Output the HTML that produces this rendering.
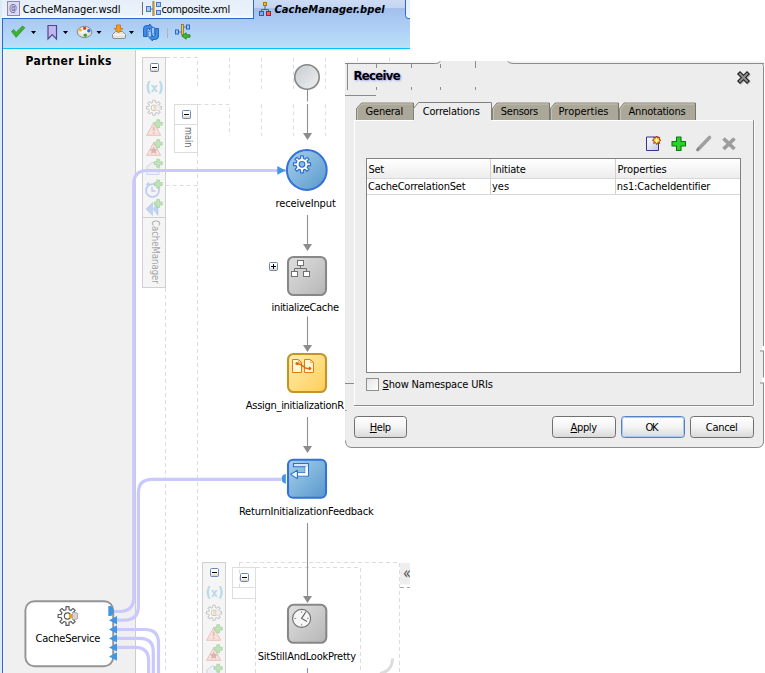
<!DOCTYPE html>
<html><head><meta charset="utf-8"><title>CacheManager.bpel</title>
<style>
html,body{margin:0;padding:0;background:#fff;}
body{width:765px;height:673px;position:relative;overflow:hidden;font-family:"DejaVu Sans Condensed","DejaVu Sans","Liberation Sans",sans-serif;font-size:11px;color:#000;}
.a{position:absolute;}
.t{position:absolute;white-space:nowrap;line-height:14px;height:14px;}
#ide{left:0;top:0;width:410px;height:673px;overflow:hidden;background:#fff;}
#tabbar{left:0;top:0;width:410px;height:18px;background:linear-gradient(#e6eef9,#eaf2fb 80%,#f6fbff);}
#toolbar{left:3px;top:19px;width:407px;height:29px;background:linear-gradient(#a9c8f3,#b2d4f6 50%,#bbe0f8);}
#cyan{left:3px;top:48px;width:407px;height:2px;background:linear-gradient(#08c4f4 50%,#fdf6f2 50%);}
#lb1{left:0;top:0;width:2px;height:673px;background:#dce9f7;}
#lb2{left:2px;top:18px;width:1px;height:655px;background:#2f68c8;}
#panel{left:3px;top:50px;width:131px;height:623px;background:#f0f0f0;border-left:1px solid #f8f5f0;border-right:1px solid #cccccc;}
</style></head><body>
<div id="ide" class="a">
<div id="tabbar" class="a"></div>
<div id="toolbar" class="a"></div>
<div id="cyan" class="a"></div>
<div id="lb1" class="a"></div><div id="lb2" class="a"></div>
<div id="panel" class="a"></div>
<!--TABS-->
<svg class="a" style="left:0;top:0" width="410" height="60" viewBox="0 0 410 60">
<defs>
<linearGradient id="atab" x1="0" y1="0" x2="0" y2="1"><stop offset="0" stop-color="#cddcf5"/><stop offset="0.42" stop-color="#c3d5f2"/><stop offset="0.43" stop-color="#a3bfec"/><stop offset="1" stop-color="#a9c8f3"/></linearGradient>
</defs>
<!-- tab bar bottom line -->
<rect x="2" y="18" width="252" height="1" fill="#2f68c8"/>
<rect x="405" y="18" width="5" height="1" fill="#2f68c8"/>
<!-- active tab -->
<path d="M253.5 19 V0 H405.5 V15.500 Q405.5 18.500 408.5 18.500 H410 V19 Z" fill="url(#atab)"/>
<path d="M253.5 19 V0" stroke="#2f68c8" stroke-width="1" fill="none"/>
<path d="M405.5 0 V15.500 Q405.5 18.500 408.5 18.500 H410" stroke="#2f68c8" stroke-width="1" fill="none"/>
<!-- tab separator -->
<rect x="142" y="2" width="1" height="13" fill="#707070"/>
<!-- @ icon -->
<rect x="7.5" y="1.5" width="12" height="14" fill="#dcdcee" stroke="#8c8ab4" stroke-width="1"/>
<!-- composite icon -->
<g>
<rect x="153" y="1" width="2" height="15" fill="#e8c040"/><rect x="152.5" y="1" width="1" height="15" fill="#807040"/>
<rect x="146.500" y="6.500" width="4" height="5" fill="#a8c8f0" stroke="#4878c0"/>
<rect x="156.500" y="2.500" width="4" height="4" fill="#a8c8f0" stroke="#4878c0"/>
<rect x="156.500" y="10.500" width="4" height="4" fill="#a8c8f0" stroke="#4878c0"/>
<path d="M151 9 H153" stroke="#4878c0"/>
</g>
<!-- bpel icon -->
<g>
<path d="M265 6 V9 M261.500 12 V9.500 H268.500 V12" stroke="#606060" fill="none"/>
<rect x="263.500" y="2.500" width="3" height="3" fill="#f0c020" stroke="#b07800"/>
<rect x="259.500" y="11.500" width="4" height="4" fill="#80a8f0" stroke="#3058c0"/>
<rect x="266.500" y="11.500" width="4" height="4" fill="#f06050" stroke="#b02010"/>
</g>
<!-- toolbar icons -->
<path d="M11.500 31.500 L13.800 29.500 L16 32.500 L22.500 26 L24.800 27.800 L16.200 37.300 Z" fill="#3cb42c" stroke="#258a1c" stroke-width="0.7"/>
<path d="M31 31 h5 l-2.500 3 z M63 31 h5 l-2.500 3 z M96.500 31 h5 l-2.500 3 z M129 31 h5 l-2.500 3 z" fill="#000"/>
<path d="M48 25.500 H56.500 V39 L52.250 34.500 L48 39 Z" fill="#c0b8ec" stroke="#54448c" stroke-width="1.2"/>
<!-- palette -->
<ellipse cx="84.500" cy="32" rx="7.300" ry="5.600" fill="#e4e2dc" stroke="#8a8680" stroke-width="1"/>
<ellipse cx="83.500" cy="30.800" rx="5" ry="3" fill="#f6f5f2"/>
<circle cx="80.300" cy="30" r="1.600" fill="#e8b418"/><circle cx="84.600" cy="28.300" r="1.600" fill="#e03424"/><circle cx="88.800" cy="30.800" r="1.700" fill="#2a6ae4"/><circle cx="85.300" cy="35.300" r="1.700" fill="#2ea82e"/>
<!-- download -->
<path d="M112.500 34.500 L115.500 31.500 H122.500 L125.500 34.500 V37 Q125.500 38.500 124 38.500 H114 Q112.500 38.500 112.500 37 Z" fill="#e4e4e4" stroke="#8e8e8e"/>
<path d="M113 34.800 H125 " stroke="#f8f8f8"/>
<path d="M116.500 25 H120.500 V28.500 H122.800 L118.500 33 L114.200 28.500 H116.500 Z" fill="#f59a23" stroke="#d06c08" stroke-width="0.8"/>
<!-- refresh -->
<path d="M143.500 28.500 Q143.500 25.500 147 25.500 H149.500 V24 L152.500 27 L149.500 30 V28.500 H148 Q147 28.500 147 30 V36.500 H143.500 Z" fill="#3c8ce8" stroke="#1c5cb8" stroke-width="0.9" stroke-linejoin="round"/>
<path d="M158.500 36 Q158.500 39.500 155 39.500 H152.500 V41 L149.500 38 L152.500 35 V36.500 H154 Q155 36.500 155 35 V28.500 H158.500 Z" fill="#3c8ce8" stroke="#1c5cb8" stroke-width="0.9" stroke-linejoin="round"/>
<path d="M148 31 H151.500 V37 H148 Z M151.500 27.500 H154.500 V34 H151.500 Z" fill="#9cc8f6" stroke="#2a6cc8" stroke-width="0.8"/>
<rect x="167" y="28" width="1" height="10" fill="#b8b0a8"/>
<!-- last icon -->
<rect x="181.500" y="24.500" width="2" height="10" fill="#f0c830" stroke="#806820" stroke-width="0.7"/>
<rect x="175.500" y="30" width="3" height="4" fill="#9cc4f4" stroke="#2c64c0"/>
<rect x="186.500" y="25" width="3" height="4" fill="#9cc4f4" stroke="#2c64c0"/>
<path d="M178.500 32 H181.500 M183.500 27 H186.500" stroke="#2c64c0" stroke-width="0.8"/>
<path d="M190 34.800 H186.200 V32.800 L181.800 36 L186.200 39.200 V37.200 H190 Z" fill="#46b836" stroke="#1c7c14" stroke-width="0.8" stroke-linejoin="round"/>
</svg>
<div class="t" style="left:8.500px;top:1px;color:#7472aa;font-size:10px;font-weight:bold;transform:scaleX(0.9);transform-origin:0 0;">@</div>
<svg class="a" style="left:0;top:0" width="410" height="673" viewBox="0 0 410 673">
<defs>
<linearGradient id="gBlue" x1="0" y1="0" x2="1" y2="1"><stop offset="0" stop-color="#a8d1ea"/><stop offset="1" stop-color="#5898cd"/></linearGradient>
<linearGradient id="gGray" x1="0" y1="0" x2="1" y2="1"><stop offset="0" stop-color="#e0e0e0"/><stop offset="1" stop-color="#b6b6b6"/></linearGradient>
<linearGradient id="gGold" x1="0" y1="0" x2="1" y2="1"><stop offset="0" stop-color="#ffeeb0"/><stop offset="1" stop-color="#ffcd58"/></linearGradient>
<linearGradient id="gStart" x1="0" y1="0" x2="1" y2="1"><stop offset="0" stop-color="#c8ccd0"/><stop offset="1" stop-color="#eef0f0"/></linearGradient>
<linearGradient id="gIco" x1="0" y1="0" x2="0" y2="1"><stop offset="0" stop-color="#ffffff"/><stop offset="0.5" stop-color="#ffffff"/><stop offset="1" stop-color="#d8ccb0"/></linearGradient>
</defs>
<path d="M166 57.500 H197.500 V89" stroke="#dcdcdc" stroke-width="1" stroke-dasharray="4 3" fill="none"/>
<path d="M229.5 57.500 V89" stroke="#dcdcdc" stroke-width="1" stroke-dasharray="4 3" fill="none"/>
<path d="M261.5 57.500 V89" stroke="#dcdcdc" stroke-width="1" stroke-dasharray="4 3" fill="none"/>
<path d="M293.5 57.500 V89" stroke="#dcdcdc" stroke-width="1" stroke-dasharray="4 3" fill="none"/>
<path d="M325.5 57.500 V89" stroke="#dcdcdc" stroke-width="1" stroke-dasharray="4 3" fill="none"/>
<path d="M197.500 104.500 H229.500 V136" stroke="#dcdcdc" stroke-width="1" stroke-dasharray="4 3" fill="none"/>
<path d="M261.5 104.500 V136" stroke="#dcdcdc" stroke-width="1" stroke-dasharray="4 3" fill="none"/>
<path d="M293.5 104.500 V136" stroke="#dcdcdc" stroke-width="1" stroke-dasharray="4 3" fill="none"/>
<path d="M325.5 104.500 V136" stroke="#dcdcdc" stroke-width="1" stroke-dasharray="4 3" fill="none"/>
<path d="M165.500 185.500 H197.500" stroke="#dcdcdc" stroke-width="1" stroke-dasharray="4 3" fill="none"/>
<path d="M357.500 57.500 V62" stroke="#dcdcdc" stroke-width="1" stroke-dasharray="4 3" fill="none"/>
<path d="M389.500 57.500 V62" stroke="#dcdcdc" stroke-width="1" stroke-dasharray="4 3" fill="none"/>
<path d="M165.500 288 V673" stroke="#dcdcdc" stroke-width="1" stroke-dasharray="4 3" fill="none"/>
<path d="M197.500 153 V673" stroke="#dcdcdc" stroke-width="1" stroke-dasharray="4 3" fill="none"/>
<path d="M239 562.500 H399.500 V673" stroke="#dcdcdc" stroke-width="1" stroke-dasharray="4 3" fill="none"/>
<path d="M256 567.500 H360.500 V673" stroke="#dcdcdc" stroke-width="1" stroke-dasharray="4 3" fill="none"/>
<path d="M255.500 599 V673" stroke="#dcdcdc" stroke-width="1" stroke-dasharray="4 3" fill="none"/>
<path d="M400 587.500 H410" stroke="#a8a8a8" stroke-dasharray="4 3" fill="none"/>
<rect x="142.5" y="57.5" width="23" height="230" fill="#f5f5f5" stroke="#d0d0d0"/>
<path d="M142.5 217.5 H165.5" stroke="#d0d0d0"/>
<rect x="174.500" y="104.500" width="23" height="48" fill="#fff" stroke="#dcdcdc"/><path d="M174.500 124.500 H197.500" stroke="#dcdcdc"/>
<rect x="202.5" y="562.5" width="23" height="120" fill="#f5f5f5" stroke="#d0d0d0"/>
<rect x="232.500" y="567.500" width="23" height="31" fill="#fff" stroke="#dedede"/><path d="M232.500 587.500 H255.500" stroke="#dedede"/>
<path d="M239.500 562.500 V587" stroke="#dcdcdc" stroke-width="1" stroke-dasharray="4 3" fill="none"/>
<g transform="translate(150 63)"><rect x="0.5" y="0.5" width="8" height="8" rx="1" fill="url(#gIco)" stroke="#6a88b4"/><rect x="2" y="4" width="5" height="1" fill="#000"/></g>
<g transform="translate(182 110)"><rect x="0.5" y="0.5" width="8" height="8" rx="1" fill="url(#gIco)" stroke="#6a88b4"/><rect x="2" y="4" width="5" height="1" fill="#000"/></g>
<g transform="translate(210 568)"><rect x="0.5" y="0.5" width="8" height="8" rx="1" fill="url(#gIco)" stroke="#6a88b4"/><rect x="2" y="4" width="5" height="1" fill="#000"/></g>
<g transform="translate(240 573)"><rect x="0.5" y="0.5" width="8" height="8" rx="1" fill="url(#gIco)" stroke="#6a88b4"/><rect x="2" y="4" width="5" height="1" fill="#000"/></g>
<g transform="translate(269 262)"><rect x="0.5" y="0.5" width="8" height="8" rx="1" fill="url(#gIco)" stroke="#6a88b4"/><rect x="2" y="4" width="5" height="1" fill="#000"/><rect x="4" y="2" width="1" height="5" fill="#000"/></g>
<path d="M159.25 106.54 L161.51 106.61 L161.51 108.99 L159.25 109.06 L158.60 110.62 L160.15 112.27 L158.47 113.95 L156.82 112.40 L155.26 113.05 L155.19 115.31 L152.81 115.31 L152.74 113.05 L151.18 112.40 L149.53 113.95 L147.85 112.27 L149.40 110.62 L148.75 109.06 L146.49 108.99 L146.49 106.61 L148.75 106.54 L149.40 104.98 L147.85 103.33 L149.53 101.65 L151.18 103.20 L152.74 102.55 L152.81 100.29 L155.19 100.29 L155.26 102.55 L156.82 103.20 L158.47 101.65 L160.15 103.33 L158.60 104.98 Z" fill="#fbfbfb" stroke="#cacaca" stroke-width="1.1" stroke-linejoin="round"/>
<circle cx="154.0" cy="107.8" r="2.8" fill="#fff" stroke="#cacaca" stroke-width="1.1"/>
<rect x="153.0" y="106.0" width="3" height="3.500" fill="#f8dcb0"/><rect x="156.0" y="105.0" width="4" height="5.500" rx="1" fill="#f0f0f0" stroke="#d8d8d8" stroke-width="0.7"/>
<g transform="translate(153.7 129.0)"><path d="M0 -6.500 L7 6.300 H-7 Z" fill="#f8e2dc" stroke="#ebc2b6" stroke-width="1" stroke-linejoin="round"/></g>
<rect x="152.8" y="126.5" width="1.800" height="4.500" fill="#e0bcbc"/><rect x="152.8" y="132.2" width="1.800" height="1.600" fill="#e0bcbc"/>
<g transform="translate(158.2 123.7)"><path d="M-1.400 -4 h2.800 v2.600 h2.600 v2.800 h-2.600 v2.600 h-2.800 v-2.600 h-2.600 v-2.800 h2.600 z" fill="#c2e3bc" stroke="#9fd09a" stroke-width="0.7"/></g>
<g transform="translate(153.7 149.0)"><path d="M0 -6.500 L7 6.300 H-7 Z" fill="#f8e2dc" stroke="#ebc2b6" stroke-width="1" stroke-linejoin="round"/></g>
<path d="M153.7 146.5 l1.300 2.600 l2.800 0.300 l-2.100 1.900 l0.600 2.800 l-2.600 -1.500 l-2.600 1.500 l0.600 -2.800 l-2.100 -1.900 l2.800 -0.300 z" fill="#d4b4b4"/>
<g transform="translate(158.2 143.7)"><path d="M-1.400 -4 h2.800 v2.600 h2.600 v2.800 h-2.600 v2.600 h-2.800 v-2.600 h-2.600 v-2.800 h2.600 z" fill="#c2e3bc" stroke="#9fd09a" stroke-width="0.7"/></g>
<path d="M147.0 166.5 l6 -4.500 l6 4.500 v8 h-12 z" fill="#eef0f8" stroke="#d0d4e4"/><rect x="148.0" y="168.5" width="10" height="3" fill="#f8f0d8"/>
<g transform="translate(158.2 163.2)"><path d="M-1.400 -4 h2.800 v2.600 h2.600 v2.800 h-2.600 v2.600 h-2.800 v-2.600 h-2.600 v-2.800 h2.600 z" fill="#c2e3bc" stroke="#9fd09a" stroke-width="0.7"/></g>
<circle cx="152.5" cy="190.5" r="6.500" fill="#f2f4fb" stroke="#b8c8f0" stroke-width="1.600"/><path d="M152.0 186.5 v4.500 h3.500" stroke="#c8c8d0" stroke-width="1.300" fill="none"/><path d="M146.5 185.0 l2.500 -2.500" stroke="#b8c8f0" stroke-width="1.600"/>
<g transform="translate(158.2 184.0)"><path d="M-1.400 -4 h2.800 v2.600 h2.600 v2.800 h-2.600 v2.600 h-2.800 v-2.600 h-2.600 v-2.800 h2.600 z" fill="#c2e3bc" stroke="#9fd09a" stroke-width="0.7"/></g>
<path d="M146.0 209.0 l6.500 -6.500 v13 z M153.0 209.0 l5 -6.500 v13 z" fill="#c0d4f0" stroke="#b0c8ec" stroke-width="0.6"/>
<g transform="translate(158.2 203.5)"><path d="M-1.400 -4 h2.800 v2.600 h2.600 v2.800 h-2.600 v2.600 h-2.800 v-2.600 h-2.600 v-2.800 h2.600 z" fill="#c2e3bc" stroke="#9fd09a" stroke-width="0.7"/></g>
<path d="M219.25 611.54 L221.51 611.61 L221.51 613.99 L219.25 614.06 L218.60 615.62 L220.15 617.27 L218.47 618.95 L216.82 617.40 L215.26 618.05 L215.19 620.31 L212.81 620.31 L212.74 618.05 L211.18 617.40 L209.53 618.95 L207.85 617.27 L209.40 615.62 L208.75 614.06 L206.49 613.99 L206.49 611.61 L208.75 611.54 L209.40 609.98 L207.85 608.33 L209.53 606.65 L211.18 608.20 L212.74 607.55 L212.81 605.29 L215.19 605.29 L215.26 607.55 L216.82 608.20 L218.47 606.65 L220.15 608.33 L218.60 609.98 Z" fill="#fbfbfb" stroke="#cacaca" stroke-width="1.1" stroke-linejoin="round"/>
<circle cx="214.0" cy="612.8" r="2.8" fill="#fff" stroke="#cacaca" stroke-width="1.1"/>
<rect x="213.0" y="611.0" width="3" height="3.500" fill="#f8dcb0"/><rect x="216.0" y="610.0" width="4" height="5.500" rx="1" fill="#f0f0f0" stroke="#d8d8d8" stroke-width="0.7"/>
<g transform="translate(213.7 634.0)"><path d="M0 -6.500 L7 6.300 H-7 Z" fill="#f8e2dc" stroke="#ebc2b6" stroke-width="1" stroke-linejoin="round"/></g>
<rect x="212.8" y="631.5" width="1.800" height="4.500" fill="#e0bcbc"/><rect x="212.8" y="637.2" width="1.800" height="1.600" fill="#e0bcbc"/>
<g transform="translate(218.2 628.7)"><path d="M-1.400 -4 h2.800 v2.600 h2.600 v2.800 h-2.600 v2.600 h-2.800 v-2.600 h-2.600 v-2.800 h2.600 z" fill="#c2e3bc" stroke="#9fd09a" stroke-width="0.7"/></g>
<g transform="translate(213.7 654.0)"><path d="M0 -6.500 L7 6.300 H-7 Z" fill="#f8e2dc" stroke="#ebc2b6" stroke-width="1" stroke-linejoin="round"/></g>
<path d="M213.7 651.5 l1.300 2.600 l2.800 0.300 l-2.100 1.900 l0.600 2.800 l-2.600 -1.500 l-2.600 1.500 l0.600 -2.800 l-2.100 -1.900 l2.800 -0.300 z" fill="#d4b4b4"/>
<g transform="translate(218.2 648.7)"><path d="M-1.400 -4 h2.800 v2.600 h2.600 v2.800 h-2.600 v2.600 h-2.800 v-2.600 h-2.600 v-2.800 h2.600 z" fill="#c2e3bc" stroke="#9fd09a" stroke-width="0.7"/></g>
<path d="M207 673 v-3 l6 -4.500 l6 4.500 v3" fill="#eef0f8" stroke="#d0d4e4"/><g transform="translate(218.2 668.2)"><path d="M-1.400 -4 h2.800 v2.600 h2.600 v2.800 h-2.600 v2.600 h-2.800 v-2.600 h-2.600 v-2.800 h2.600 z" fill="#c2e3bc" stroke="#9fd09a" stroke-width="0.7"/></g>
<path d="M286 170.500 H147 Q133.800 170.500 133.800 184 V597 Q133.800 611.500 119.500 611.500 H113" stroke="#c9c9fd" stroke-width="3.200" fill="none"/>
<path d="M281 479.300 H152 Q138.400 479.300 138.400 493 V606 Q138.400 620.200 124 620.200 H116" stroke="#c9c9fd" stroke-width="3.200" fill="none"/>
<path d="M116 629.500 H145 Q158.500 629.500 158.500 643 V673" stroke="#c9c9fd" stroke-width="3.200" fill="none"/>
<path d="M116 638.400 H140 Q153.300 638.400 153.300 652 V673" stroke="#c9c9fd" stroke-width="3.200" fill="none"/>
<path d="M116 647.400 H135.500 Q148.600 647.400 148.600 661 V673" stroke="#c9c9fd" stroke-width="3.200" fill="none"/>
<path d="M307.5 89 V134" stroke="#909090" stroke-width="1.100" fill="none"/><path d="M303.0 133 H312.0 L307.5 140 Z" fill="#8c8c8c"/>
<rect x="305" y="101.500" width="5" height="2.500" fill="#fff"/>
<path d="M307.5 215 V245" stroke="#909090" stroke-width="1.100" fill="none"/><path d="M303.0 244 H312.0 L307.5 251 Z" fill="#8c8c8c"/>
<path d="M307.5 316.5 V346" stroke="#909090" stroke-width="1.100" fill="none"/><path d="M303.0 345 H312.0 L307.5 352 Z" fill="#8c8c8c"/>
<path d="M307.5 417 V447" stroke="#909090" stroke-width="1.100" fill="none"/><path d="M303.0 446 H312.0 L307.5 453 Z" fill="#8c8c8c"/>
<path d="M307.5 523 V597" stroke="#909090" stroke-width="1.100" fill="none"/><path d="M303.0 596 H312.0 L307.5 603 Z" fill="#8c8c8c"/>
<path d="M307.500 668 V673" stroke="#909090" stroke-width="1.100" fill="none"/>
<circle cx="307" cy="77" r="12.200" fill="url(#gStart)" stroke="#868686" stroke-width="1.600"/>
<circle cx="306.800" cy="170" r="19.900" fill="url(#gBlue)" stroke="#3572d6" stroke-width="2"/>
<path d="M277.300 166 L285.500 170.400 L277.300 174.800 Z" fill="#3f96e4"/>
<path d="M307.83 162.90 L310.49 162.95 L310.49 165.65 L307.83 165.70 L307.12 167.43 L308.96 169.35 L307.05 171.26 L305.13 169.42 L303.40 170.13 L303.35 172.79 L300.65 172.79 L300.60 170.13 L298.87 169.42 L296.95 171.26 L295.04 169.35 L296.88 167.43 L296.17 165.70 L293.51 165.65 L293.51 162.95 L296.17 162.90 L296.88 161.17 L295.04 159.25 L296.95 157.34 L298.87 159.18 L300.60 158.47 L300.65 155.81 L303.35 155.81 L303.40 158.47 L305.13 159.18 L307.05 157.34 L308.96 159.25 L307.12 161.17 Z" fill="#ffffff" stroke="#2f6fd0" stroke-width="1.2" stroke-linejoin="round"/>
<circle cx="302" cy="164.3" r="2.8" fill="#8cc0e4" stroke="#2f6fd0" stroke-width="1.2"/>
<rect x="288" y="257" width="38" height="38" rx="5.500" fill="url(#gGray)" stroke="#888888" stroke-width="2.100"/>
<path d="M300.500 265 V268.500 M294.500 271.500 V268.500 H306.500 V271.500" stroke="#707070" fill="none"/>
<rect x="297.5" y="260.5" width="6" height="5" fill="#fff" stroke="#707070"/>
<rect x="291.5" y="271.5" width="6" height="5" fill="#fff" stroke="#707070"/>
<rect x="303.5" y="271.5" width="6" height="5" fill="#fff" stroke="#707070"/>
<rect x="288" y="354" width="38" height="38" rx="5.500" fill="url(#gGold)" stroke="#c39526" stroke-width="2.100"/>
<path d="M292.500 359.500 H298.500 L301.500 362.500 V372.500 H292.500 Z M304.500 359.500 H310.500 L313.500 362.500 V372.500 H304.500 Z" fill="#fff6d4" stroke="#de7c14" stroke-width="1"/>
<path d="M298.500 359.500 V362.500 H301.500 M310.500 359.500 V362.500 H313.500" fill="none" stroke="#eda044" stroke-width="0.800"/>
<path d="M297 363.500 Q301 364 303.500 366.500 T309.500 368.500" stroke="#d66a10" stroke-width="1.300" fill="none"/><circle cx="297" cy="363.500" r="1.600" fill="#d66a10"/><path d="M309.700 366.400 l2 2 l-2 2 l-2 -2 z" fill="#d66a10"/>
<rect x="288" y="459.800" width="38" height="38" rx="5" fill="url(#gBlue)" stroke="#3572d6" stroke-width="2.100"/>
<path d="M285.800 474 A4.900 4.900 0 0 0 285.800 483.700 Z" fill="#3f96e4"/>
<path d="M293.500 463.500 H308.500 V476 H297.300 V472.800 H305.300 V466.700 H293.500 Z" fill="#d4e8f6" stroke="#2f6fd0" stroke-width="1.100" stroke-linejoin="miter"/>
<path d="M305.300 466.700 H308 V475.500 H297.500 V473.300 H305.300 Z" fill="#ffffff"/>
<path d="M297.400 470.300 L290.600 474.400 L297.400 478.600 Z" fill="#eef7fd" stroke="#2f6fd0" stroke-width="1.100" stroke-linejoin="round"/>
<rect x="288" y="604.800" width="38.300" height="38" rx="5.500" fill="url(#gGray)" stroke="#888888" stroke-width="2.100"/>
<circle cx="301.600" cy="618.400" r="9" fill="#f6f6f6" stroke="#6c6c6c" stroke-width="1.100"/><path d="M306 611.800 L301.600 618.400 L307 621.400" stroke="#606060" stroke-width="1.100" fill="none"/>
<path d="M301.600 611.300 v1.600 M301.600 623.900 v1.600 M294.500 618.400 h1.600 M307.100 618.400 h1.600" stroke="#808080" stroke-width="0.900"/>
<rect x="400" y="563" width="10" height="21.500" fill="#eeeeee"/>
<path d="M392.500 658.500 Q392.500 671 380 673.500" stroke="#dcdcdc" stroke-width="3" fill="none"/>
<rect x="25.400" y="601.200" width="87.800" height="65" rx="9" fill="#fff" stroke="#949494" stroke-width="1.900"/>
<path d="M73.82 614.48 L76.88 614.51 L76.88 617.49 L73.82 617.52 L73.04 619.40 L75.19 621.58 L73.08 623.69 L70.90 621.54 L69.02 622.32 L68.99 625.38 L66.01 625.38 L65.98 622.32 L64.10 621.54 L61.92 623.69 L59.81 621.58 L61.96 619.40 L61.18 617.52 L58.12 617.49 L58.12 614.51 L61.18 614.48 L61.96 612.60 L59.81 610.42 L61.92 608.31 L64.10 610.46 L65.98 609.68 L66.01 606.62 L68.99 606.62 L69.02 609.68 L70.90 610.46 L73.08 608.31 L75.19 610.42 L73.04 612.60 Z" fill="#fafafa" stroke="#5c5c5c" stroke-width="1.2" stroke-linejoin="round"/>
<circle cx="67.5" cy="616" r="3.1" fill="#fff" stroke="#5c5c5c" stroke-width="1.2"/>
<rect x="69" y="614" width="3.500" height="4.300" fill="#f0a010"/><rect x="72.500" y="612.500" width="5" height="7" rx="1.300" fill="#d4d4d8" stroke="#a4a4a8" stroke-width="0.8"/>
<path d="M108.300 606 H110 Q113.500 606 113.500 611 Q113.500 616 110 616 H108.300 Z" fill="#3f96e4"/>
<path d="M117 616.0 V624.4000000000001 L109 620.2 Z" fill="#3f96e4"/>
<path d="M117 625.3 V633.7 L109 629.5 Z" fill="#3f96e4"/>
<path d="M117 634.1999999999999 V642.6 L109 638.4 Z" fill="#3f96e4"/>
<path d="M117 643.1999999999999 V651.6 L109 647.4 Z" fill="#3f96e4"/>
<path d="M117 652.3 V660.7 L109 656.5 Z" fill="#3f96e4"/>
</svg>
<div class="t" id="t_main" style="left:194.800px;top:127.300px;transform-origin:0 0;transform:rotate(90deg) scaleX(0.83);color:#6a6a6a;">main</div>
<div class="t" id="t_cm" style="left:162.400px;top:220.300px;transform-origin:0 0;transform:rotate(90deg) scaleX(0.86);color:#a6a6a6;">CacheManager</div>
<div class="t" style="left:145.500px;top:79px;font-weight:bold;font-size:13px;color:#b8dae9;line-height:16px;height:16px;"><span style="font-size:14px;letter-spacing:-0.5px;">(</span><span style="font-size:12px;">x</span><span style="font-size:14px;">)</span></div>
<div class="t" style="left:205.500px;top:584px;font-weight:bold;font-size:13px;color:#b8dae9;line-height:16px;height:16px;"><span style="font-size:14px;letter-spacing:-0.5px;">(</span><span style="font-size:12px;">x</span><span style="font-size:14px;">)</span></div>
<div class="t" style="left:402.500px;top:563px;font-size:18px;line-height:20px;height:20px;color:#505050;transform:scaleX(0.8);transform-origin:0 0;">«</div>
<div class="t" id="t_wsdl" style="left:22.80px;top:3px;letter-spacing:-0.050px;">CacheManager.wsdl</div>
<div class="t" id="t_comp" style="left:161.40px;top:3px;letter-spacing:-0.333px;">composite.xml</div>
<div class="t" id="t_bpel" style="left:274.40px;top:3px;letter-spacing:0.076px;font-weight:bold;font-style:italic;">CacheManager.bpel</div>
<div class="t" id="t_pl" style="left:25.50px;top:54px;letter-spacing:0.383px;font-weight:bold;font-size:12px;">Partner Links</div>
<div class="t" id="t_recv" style="left:275.60px;top:197px;letter-spacing:-0.145px;">receiveInput</div>
<div class="t" id="t_init" style="left:271.50px;top:301px;letter-spacing:-0.322px;">initializeCache</div>
<div class="t" id="t_assign" style="left:245.80px;top:399px;letter-spacing:-0.286px;">Assign_initializationR</div>
<div class="t" id="t_ret" style="left:238.90px;top:505px;letter-spacing:-0.200px;">ReturnInitializationFeedback</div>
<div class="t" id="t_sit" style="left:257.70px;top:650px;letter-spacing:-0.235px;">SitStillAndLookPretty</div>
<div class="t" id="t_cs" style="left:35.60px;top:632px;letter-spacing:-0.236px;">CacheService</div>
</div>
<!--DIALOG-->
<div class="a" id="dlg" style="left:345px;top:61px;width:420px;height:388px;">
<svg class="a" style="left:0;top:0" width="420" height="388" viewBox="345 61 420 388">
<defs>
<linearGradient id="gBtn" x1="0" y1="0" x2="0" y2="1"><stop offset="0" stop-color="#ffffff"/><stop offset="0.5" stop-color="#f4f4f4"/><stop offset="1" stop-color="#d8d8d8"/></linearGradient>
<linearGradient id="gHdr" x1="0" y1="0" x2="0" y2="1"><stop offset="0" stop-color="#ffffff"/><stop offset="1" stop-color="#ededed"/></linearGradient>
<linearGradient id="gChk" x1="0" y1="0" x2="1" y2="1"><stop offset="0" stop-color="#e4e4e4"/><stop offset="1" stop-color="#ffffff"/></linearGradient>
</defs>
<path d="M345 61 H760 Q764 61 764 65 V441 Q764 448 757 448 H352 Q345 448 345 440.500 Z" fill="#ededed"/>
<rect x="345" y="60" width="92" height="3" fill="#fff"/><rect x="347" y="61" width="90" height="2" fill="#f7f7f7"/>
<path d="M436 61 H441 L437 63 H436 Z" fill="#fff" opacity="0.7"/>
<rect x="513" y="61" width="248" height="2" fill="#f3f3f3"/>
<path d="M345 63.500 H435.500 Q438.500 63.500 440.500 61.300" stroke="#858585" fill="none"/>
<path d="M507.500 61.300 Q509.500 63.500 513 63.500 H764" stroke="#8c8c8c" fill="none"/>
<path d="M762.500 64 Q763.500 64.500 763.500 66.500 V441 Q763.500 447.500 757 447.500 H352 Q345.500 447.500 345.500 440.500" stroke="#8c8c8c" fill="none"/>
<rect x="762" y="346" width="3" height="4.500" fill="#fff"/><rect x="760" y="350.500" width="3" height="1" fill="#8c8c8c"/>
<rect x="762" y="377.500" width="3" height="5" fill="#fff"/><rect x="760" y="382.500" width="3" height="1" fill="#8c8c8c"/>
<path d="M347.500 64 V90" stroke="#8a8a8a" fill="none"/>
<path d="M345 95.500 H376" stroke="#8a8a8a" fill="none"/>
<path d="M345 383.500 H354" stroke="#8a8a8a" fill="none"/>
<rect x="345" y="410" width="1.500" height="1" fill="#8a8a8a"/>
<path d="M376.5 64 V68 M376.5 87 V90" stroke="#8c8c8c" fill="none"/>
<path d="M411.5 64 V68 M411.5 87 V90" stroke="#8c8c8c" fill="none"/>
<path d="M440.5 64 V68 M440.5 87 V90" stroke="#8c8c8c" fill="none"/>
<path d="M475.500 61 V68 M475.500 87 V90" stroke="#8c8c8c" fill="none"/>
<path d="M354 406.500 H754.500 V120" stroke="#fafafa" fill="none"/>
<path d="M354.500 406 V120.500 H753" stroke="#ffffff" fill="none"/>
<path d="M753.500 120 V405.500 H354" stroke="#8c8c8c" fill="none"/>
<path d="M356.5 120 L356.5 108.500 L361.5 103 H413.5 V120 Z" fill="#aca899"/>
<path d="M356.5 120 L356.5 108.500 L361.5 103 H413.5" stroke="#868478" fill="none"/>
<path d="M357.5 120 L357.5 109 L362.0 104 H412.5" stroke="#c4c1b4" fill="none"/>
<path d="M413.5 103 V120" stroke="#77756a" fill="none"/>
<path d="M492.5 120 L492.5 108.500 L497 103 H549.5 V120 Z" fill="#aca899"/>
<path d="M492.5 120 L492.5 108.500 L497 103 H549.5" stroke="#868478" fill="none"/>
<path d="M493.5 120 L493.5 109 L497.5 104 H548.5" stroke="#c4c1b4" fill="none"/>
<path d="M549.5 103 V120" stroke="#77756a" fill="none"/>
<path d="M550.5 120 L550.5 108.500 L555 103 H618.5 V120 Z" fill="#aca899"/>
<path d="M550.5 120 L550.5 108.500 L555 103 H618.5" stroke="#868478" fill="none"/>
<path d="M551.5 120 L551.5 109 L555.5 104 H617.5" stroke="#c4c1b4" fill="none"/>
<path d="M618.5 103 V120" stroke="#77756a" fill="none"/>
<path d="M619.5 120 L619.5 108.500 L624 103 H695.5 V120 Z" fill="#aca899"/>
<path d="M619.5 120 L619.5 108.500 L624 103 H695.5" stroke="#868478" fill="none"/>
<path d="M620.5 120 L620.5 109 L624.5 104 H694.5" stroke="#c4c1b4" fill="none"/>
<path d="M695.5 103 V120" stroke="#77756a" fill="none"/>
<path d="M413.5 121 L413.5 108.500 L418.5 102.500 H491.5 V121 Z" fill="#ededed"/>
<path d="M413.5 120 L413.5 108.500 L418.5 102.500 H491.5 V120" stroke="#808080" fill="none"/>
<rect x="366.500" y="158.500" width="374" height="214" fill="#fff" stroke="#828282"/>
<rect x="367" y="159" width="373" height="19" fill="url(#gHdr)"/>
<path d="M367 178.500 H740 M367 194.500 H740" stroke="#d8d8d8" fill="none"/>
<path d="M490.500 159 V194 M615.500 159 V194" stroke="#d0d0d0" fill="none"/>
<rect x="366.500" y="378.500" width="12" height="12" fill="url(#gChk)" stroke="#8e8f8f"/>
<rect x="354.5" y="416.500" width="52" height="21" rx="3" fill="url(#gBtn)" stroke="#707070"/>
<rect x="552.5" y="416.500" width="63" height="21" rx="3" fill="url(#gBtn)" stroke="#707070"/>
<rect x="621.5" y="416.500" width="63" height="21" rx="3" fill="url(#gBtn)" stroke="#5a7fc0"/>
<rect x="622.5" y="417.500" width="61" height="19" rx="2" fill="none" stroke="#a8c8f0"/>
<rect x="690.5" y="416.500" width="63" height="21" rx="3" fill="url(#gBtn)" stroke="#707070"/>
<path d="M738.500 72.500 L748.500 82.500 M748.500 72.500 L738.500 82.500" stroke="#c4c4c4" stroke-width="4.600" transform="translate(0.900 0.900)"/>
<path d="M738.500 72.500 L748.500 82.500 M748.500 72.500 L738.500 82.500" stroke="#1c1c1c" stroke-width="4.200"/>
<path d="M739.300 73.300 L747.700 81.700 M747.700 73.300 L739.300 81.700" stroke="#8e8e8e" stroke-width="2.100"/>
<linearGradient id="gPg" x1="0" y1="0" x2="1" y2="1"><stop offset="0" stop-color="#ffffff"/><stop offset="1" stop-color="#c4c4ee"/></linearGradient>
<path d="M646.500 137 H658.500 V150.500 H646.500 Z" fill="url(#gPg)" stroke="#34348c"/>
<path d="M656.70 136.00 L657.69 137.90 L659.74 137.26 L659.10 139.31 L661.00 140.30 L659.10 141.29 L659.74 143.34 L657.69 142.70 L656.70 144.60 L655.71 142.70 L653.66 143.34 L654.30 141.29 L652.40 140.30 L654.30 139.31 L653.66 137.26 L655.71 137.90 Z" fill="#f8dc30" stroke="#b02808" stroke-width="0.900" stroke-linejoin="round"/>
<path d="M656.7 138.10000000000002 V142.5 M654.5 140.3 H658.9000000000001" stroke="#fff8c0" stroke-width="0.900"/>
<path d="M676.500 137 h4.500 v4.500 h4.500 v4.500 h-4.500 v4.500 h-4.500 v-4.500 h-4.500 v-4.500 h4.500 z" fill="#2cd02c" stroke="#0a7a0a" stroke-width="1.100" stroke-linejoin="round"/>
<path d="M698 149.500 L709.500 137.500" stroke="#a0a0a0" stroke-width="3.600" stroke-linecap="round"/><path d="M696.800 150.800 L699 147.500" stroke="#808080" stroke-width="1.400"/>
<path d="M723.500 138.500 L734.500 149 M734.500 138.500 L723.500 149" stroke="#9c9c9c" stroke-width="3.800" stroke-linecap="butt"/>
</svg>
</div>
<div class="t" id="t_title" style="left:353.50px;top:69px;letter-spacing:-0.700px;font-weight:bold;font-size:13px;text-shadow:0 0 2px #b0b0f8,1px 1px 2px #a8a8f0;">Receive</div>
<div class="t" id="t_gen" style="left:365.60px;top:105px;letter-spacing:-0.233px;">General</div>
<div class="t" id="t_cor" style="left:422.80px;top:105px;letter-spacing:-0.237px;">Correlations</div>
<div class="t" id="t_sen" style="left:500.80px;top:105px;letter-spacing:-0.267px;">Sensors</div>
<div class="t" id="t_pro" style="left:558.60px;top:105px;letter-spacing:-0.022px;">Properties</div>
<div class="t" id="t_ann" style="left:628.60px;top:105px;letter-spacing:-0.240px;">Annotations</div>
<div class="t" id="t_set" style="left:368.60px;top:163px;letter-spacing:-0.300px;">Set</div>
<div class="t" id="t_ini" style="left:492.80px;top:163px;letter-spacing:-0.228px;">Initiate</div>
<div class="t" id="t_prp" style="left:617.60px;top:163px;letter-spacing:-0.089px;">Properties</div>
<div class="t" id="t_ccs" style="left:368.00px;top:180px;letter-spacing:-0.222px;">CacheCorrelationSet</div>
<div class="t" id="t_yes" style="left:492.00px;top:180px;">yes</div>
<div class="t" id="t_ns1" style="left:616.80px;top:180px;letter-spacing:-0.156px;">ns1:CacheIdentifier</div>
<div class="t" id="t_show" style="left:382.60px;top:378px;letter-spacing:-0.178px;"><u>S</u>how Namespace URIs</div>
<div class="t" id="t_help" style="left:369.80px;top:421px;letter-spacing:-0.467px;"><u>H</u>elp</div>
<div class="t" id="t_apply" style="left:570.50px;top:421px;letter-spacing:-0.325px;"><u>A</u>pply</div>
<div class="t" id="t_ok" style="left:645.60px;top:421px;letter-spacing:-1.400px;">OK</div>
<div class="t" id="t_cancel" style="left:705.80px;top:421px;letter-spacing:-0.300px;">Cancel</div>
</body></html>
